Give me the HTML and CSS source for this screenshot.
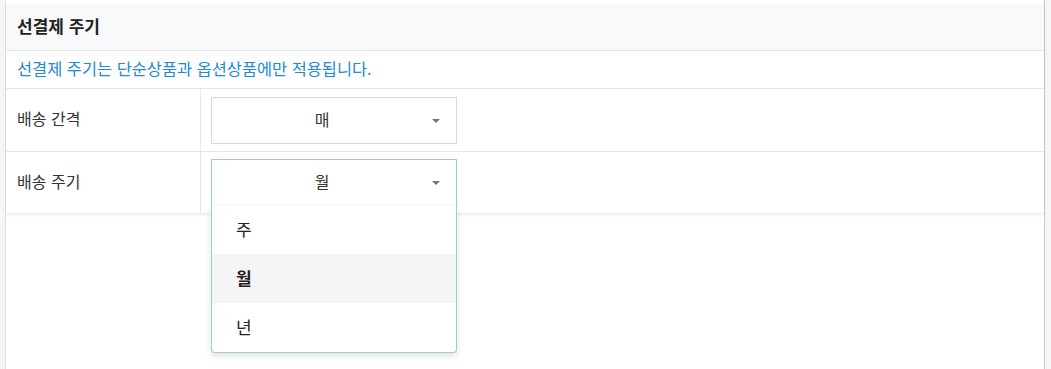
FILE: index.html
```html
<!DOCTYPE html>
<html lang="ko">
<head>
<meta charset="utf-8">
<link rel="stylesheet" href="styles.css">
</head>
<body>
<div class="frame">
  <div class="card">
    <div class="card-head">선결제 주기</div>
    <div class="notice">선결제 주기는 단순상품과 옵션상품에만 적용됩니다.</div>
    <div class="row">
      <div class="label">배송 간격</div>
      <div class="field">
        <div class="select">
          <span class="value">매</span>
          <span class="caret"></span>
        </div>
      </div>
    </div>
    <div class="row row-last">
      <div class="label">배송 주기</div>
      <div class="field">
        <div class="select select-open">
          <span class="value">월</span>
          <span class="caret"></span>
          <ul class="menu">
            <li class="option">주</li>
            <li class="option option-active">월</li>
            <li class="option">년</li>
          </ul>
        </div>
      </div>
    </div>
  </div>
</div>
</body>
</html>
```
FILE: styles.css
```css
* { box-sizing: border-box; }
html, body { margin: 0; padding: 0; }
body {
  background: #f6f6f6;
  font-family: "Noto Sans CJK KR", "Noto Sans", sans-serif;
  color: #333;
  font-size: 16px;
  height: 369px;
  overflow: hidden;
}
.frame {
  margin-left: 5px;
  width: 1040px;
  height: 369px;
  background: #fff;
  border-left: 1px solid #e2e2e2;
  border-right: 1px solid #c8c8c8;
  padding-top: 4px;
}
.card {
  background: #fff;
  box-shadow: 0 2px 3px rgba(0, 0, 0, 0.08);
}
.card-head {
  height: 47px;
  background: #f8f9fa;
  border-bottom: 1px solid #e6e6e6;
  padding: 0 0 4px 11px;
  display: flex;
  align-items: center;
  font-size: 17px;
  font-weight: 700;
  color: #222;
}
.notice {
  height: 38px;
  border-bottom: 1px solid #e6e6e6;
  padding: 0 0 3px 11px;
  display: flex;
  align-items: center;
  color: #2389d2;
  font-size: 16.4px;
}
.row {
  display: flex;
  height: 63px;
  border-bottom: 1px solid #e6e6e6;
}
.row-last {
  height: 61px;
  border-bottom: none;
}
.label {
  width: 195px;
  border-right: 1px solid #e6e6e6;
  padding: 0 0 4px 11px;
  display: flex;
  align-items: center;
  font-size: 16px;
  color: #333;
}
.field {
  padding: 8px 0 0 10px;
}
.row-last .field { padding-top: 7px; }
.select {
  position: relative;
  width: 246px;
  height: 47px;
  border: 1px solid #d9d9d9;
  display: flex;
  align-items: center;
  justify-content: center;
  padding: 0 24px 3px 0;
  font-size: 16px;
  color: #333;
}
.select-open {
  border-color: #9ccbd8;
  border-bottom-color: transparent;
}
.caret {
  position: absolute;
  right: 16px;
  top: 50%;
  margin-top: -2px;
  width: 0;
  height: 0;
  border-left: 4px solid transparent;
  border-right: 4px solid transparent;
  border-top: 4px solid #777;
}
.menu {
  position: absolute;
  left: -1px;
  top: 45px;
  width: 246px;
  margin: 0;
  padding: 0;
  list-style: none;
  background: #fff;
  border: 1px solid #9ccbd8;
  border-top: none;
  border-radius: 0 0 4px 4px;
  box-shadow: 0 3px 6px rgba(0, 0, 0, 0.12);
  z-index: 5;
}
.option {
  height: 49px;
  display: flex;
  align-items: center;
  padding: 0 0 3px 24px;
  font-size: 17px;
  color: #222;
}
.option:first-child { border-top: 1px solid #f6f6f6; }
.option-active {
  background: #f5f5f5;
  font-weight: 700;
}
```
